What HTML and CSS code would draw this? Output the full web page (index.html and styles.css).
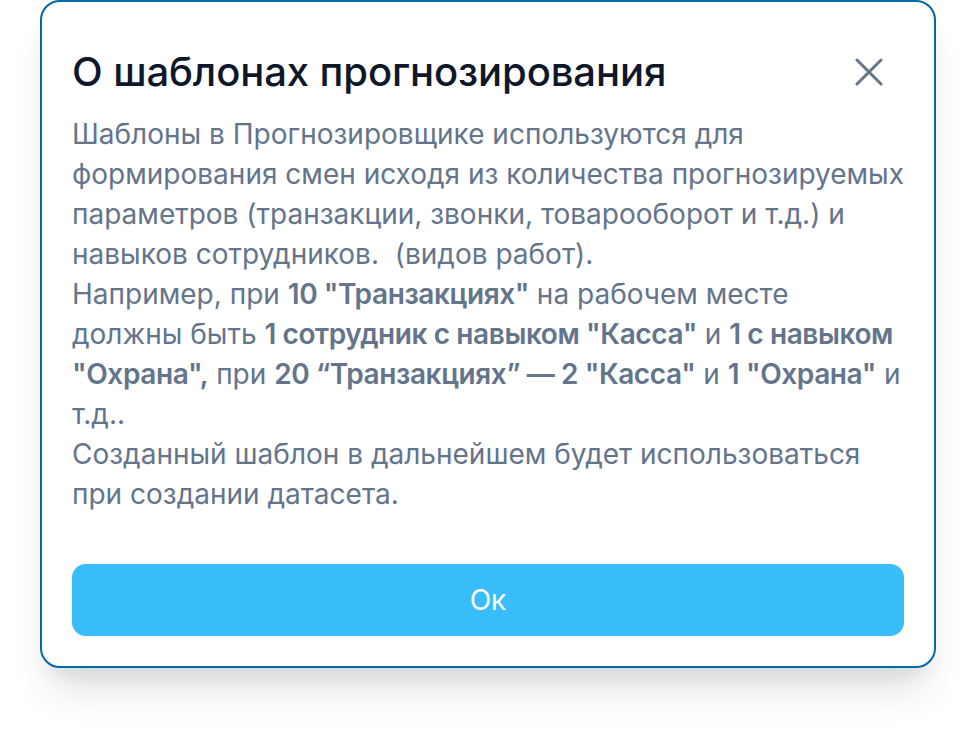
FILE: index.html
```html
<!DOCTYPE html>
<html lang="ru">
<head>
<meta charset="utf-8">
<title>О шаблонах прогнозирования</title>
<link rel="stylesheet" href="styles.css">
</head>
<body>
<div class="page">
<div class="modal">
  <div class="modal-header">
    <h2 class="modal-title">О шаблонах прогнозирования</h2>
    <button class="close-btn" type="button" aria-label="Закрыть">
      <svg width="28" height="28" viewBox="0 0 28 28" fill="none" stroke="#64748b" stroke-width="3" stroke-linecap="round">
        <path d="M2 2 L26 26 M26 2 L2 26"/>
      </svg>
    </button>
  </div>
  <div class="modal-body">
    <p>Шаблоны в Прогнозировщике используются для формирования смен исходя из количества прогнозируемых параметров (транзакции, звонки, товарооборот и т.д.) и навыков сотрудников.&nbsp; (видов работ).</p>
    <p>Например, при <b>10 "Транзакциях"</b> на рабочем месте должны быть <b>1 сотрудник с навыком "Касса"</b> и <b>1 с навыком "Охрана",</b> при <b>20 “Транзакциях” — 2 "Касса"</b> и <b>1 "Охрана"</b> и т.д..</p>
    <p>Созданный шаблон в дальнейшем будет использоваться при создании датасета.</p>
  </div>
  <button class="ok-btn" type="button">Ок</button>
</div>
</div>
</body>
</html>
```

FILE: styles.css
```css
* { box-sizing: border-box; }

html, body {
  margin: 0;
  background: #ffffff;
}

body {
  font-family: Inter, "Noto Sans", sans-serif;
}

.page {
  min-height: 748px;
  padding-bottom: 81px;
}

.modal {
  width: 896px;
  margin: 0 auto;
  border: 2px solid #0369a1;
  border-radius: 20px;
  background: #ffffff;
  padding: 46px 30px 30px;
  box-shadow: 0 32px 40px -12px rgba(15, 23, 42, 0.13), 0 14px 20px -8px rgba(15, 23, 42, 0.08);
}

.modal-header {
  display: flex;
  align-items: center;
  justify-content: space-between;
}

.modal-title {
  margin: 0;
  font-size: 40px;
  line-height: 48px;
  font-weight: 500;
  color: #0f172a;
  letter-spacing: -0.1px;
}

.close-btn {
  display: flex;
  padding: 0;
  margin: 0 21px 0 0;
  border: 0;
  background: none;
  cursor: pointer;
}

.modal-body {
  margin-top: 18px;
  color: #64748b;
  font-size: 28px;
  line-height: 40px;
}

.modal-body p {
  margin: 0;
}

.modal-body b {
  font-weight: 600;
  letter-spacing: -0.4px;
}

.ok-btn {
  display: block;
  width: 100%;
  height: 72px;
  margin-top: 50px;
  border: 0;
  border-radius: 14px;
  background: #38bdf8;
  color: #ffffff;
  font-family: Inter, "Noto Sans", sans-serif;
  font-size: 28px;
  font-weight: 400;
  cursor: pointer;
}
```
